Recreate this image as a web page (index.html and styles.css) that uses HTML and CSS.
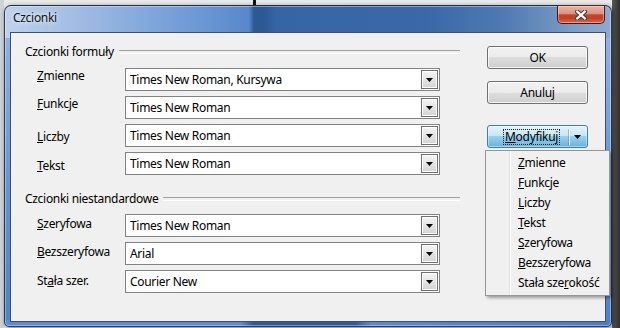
FILE: index.html
```html
<!DOCTYPE html>
<html lang="pl">
<head>
<meta charset="utf-8">
<title>Czcionki</title>
<link rel="stylesheet" href="styles.css">
</head>
<body>
<div class="window">
  <div class="titlebar">
    <span class="title">Czcionki</span>
    <div class="close">
      <svg width="12" height="10" viewBox="0 0 12 10">
        <path d="M2.2 1.6 L9.8 8.4 M9.8 1.6 L2.2 8.4" stroke="#3a3a3a" stroke-width="4.2" stroke-linecap="square" fill="none"/>
        <path d="M2.2 1.6 L9.8 8.4 M9.8 1.6 L2.2 8.4" stroke="#ffffff" stroke-width="2.2" stroke-linecap="square" fill="none"/>
      </svg>
    </div>
  </div>
  <div class="client">
    <div class="fields">
      <div class="group-head"><span>Czcionki formuły</span></div>
      <div class="rows rows-first">
        <label class="lbl p0"><u>Z</u>mienne</label>
        <div class="combo"><span class="val">Times New Roman, Kursywa</span><span class="drop"><svg width="7" height="4" viewBox="0 0 7 4"><polygon points="0,0 7,0 3.5,4" fill="#000"/></svg></span></div>
        <label class="lbl p0"><u>F</u>unkcje</label>
        <div class="combo"><span class="val">Times New Roman</span><span class="drop"><svg width="7" height="4" viewBox="0 0 7 4"><polygon points="0,0 7,0 3.5,4" fill="#000"/></svg></span></div>
        <label class="lbl p5"><u>L</u>iczby</label>
        <div class="combo"><span class="val">Times New Roman</span><span class="drop"><svg width="7" height="4" viewBox="0 0 7 4"><polygon points="0,0 7,0 3.5,4" fill="#000"/></svg></span></div>
        <label class="lbl p6"><u>T</u>ekst</label>
        <div class="combo"><span class="val">Times New Roman</span><span class="drop"><svg width="7" height="4" viewBox="0 0 7 4"><polygon points="0,0 7,0 3.5,4" fill="#000"/></svg></span></div>
      </div>
      <div class="group-head second"><span>Czcionki niestandardowe</span></div>
      <div class="rows rows-second">
        <label class="lbl p2"><u>S</u>zeryfowa</label>
        <div class="combo"><span class="val">Times New Roman</span><span class="drop"><svg width="7" height="4" viewBox="0 0 7 4"><polygon points="0,0 7,0 3.5,4" fill="#000"/></svg></span></div>
        <label class="lbl p2"><u>B</u>ezszeryfowa</label>
        <div class="combo"><span class="val">Arial</span><span class="drop"><svg width="7" height="4" viewBox="0 0 7 4"><polygon points="0,0 7,0 3.5,4" fill="#000"/></svg></span></div>
        <label class="lbl p3">St<u>a</u>ła szer.</label>
        <div class="combo"><span class="val">Courier New</span><span class="drop"><svg width="7" height="4" viewBox="0 0 7 4"><polygon points="0,0 7,0 3.5,4" fill="#000"/></svg></span></div>
      </div>
    </div>
    <div class="buttons">
      <div class="btn">OK</div>
      <div class="btn btn-gap">Anuluj</div>
      <div class="btn btn-split">
        <span class="focus"><u>M</u>odyfikuj</span>
        <span class="sep"></span>
        <svg class="split-arrow" width="7" height="4" viewBox="0 0 7 4"><polygon points="0,0 7,0 3.5,4" fill="#000"/></svg>
        <div class="menu">
          <div class="item"><u>Z</u>mienne</div>
          <div class="item"><u>F</u>unkcje</div>
          <div class="item"><u>L</u>iczby</div>
          <div class="item"><u>T</u>ekst</div>
          <div class="item"><u>S</u>zeryfowa</div>
          <div class="item"><u>B</u>ezszeryfowa</div>
          <div class="item">Stała sze<u>r</u>okość</div>
        </div>
      </div>
    </div>
  </div>
</div>
</body>
</html>
```
FILE: styles.css
```css
* { box-sizing: border-box; }

html, body { margin: 0; }

body {
  width: 620px;
  height: 328px;
  overflow: hidden;
  font-family: "Noto Sans", "Open Sans", sans-serif;
  font-size: 12px;
  line-height: 16px;
  letter-spacing: -0.3px;
  color: #000;
  padding: 5px 0 0 4px;
  background:
    linear-gradient(to right, transparent 253px, #111 253px, #111 256px, transparent 256px) top left / 100% 6px no-repeat,
    linear-gradient(to right, #cfd2d6 0, #cfd2d6 4px, #e9e9e9 4px, #e9e9e9 612px, #5a5a5a 612px, #2e2e2e 620px);
}

.window {
  width: 608px;
  height: 322px;
  border: 1px solid rgba(18, 30, 52, 0.8);
  border-radius: 7px 7px 5px 5px;
  padding: 0 5px 4px 5px;
  display: flex;
  flex-direction: column;
  box-shadow: inset 0 0 0 1px rgba(255, 255, 255, 0.35), 1px 1px 4px rgba(0, 0, 0, 0.5);
  background:
    linear-gradient(to right, #bdd2ec 0, #9dbae3 80px, #719cd8 180px, #5888cc 244px, #2c5893 249px, #2c5893 258px, #3665a6 272px, #3a68a8 420px, #4f7ab2 500px, #86a5cc 585px, #8eabd0 608px) top left / 100% 32px no-repeat,
    linear-gradient(to right, #5d8cd0 0, #5d8cd0 236px, #2f5b9b 248px, #2f5b9b 350px, #5a8ad0 366px, #4a7cc4 608px) bottom left / 100% 6px no-repeat,
    linear-gradient(to bottom, #9ab8e2 0, #6592d0 60%, #4f80c6 100%);
}

.titlebar {
  height: 26px;
  display: flex;
  align-items: flex-start;
}

.title {
  padding: 4px 0 0 3px;
  color: #111;
  text-shadow: 0 0 6px rgba(255, 255, 255, 0.9), 0 0 3px rgba(255, 255, 255, 0.6);
}

.close {
  margin: -1px 1px 0 auto;
  width: 48px;
  height: 19px;
  border: 1px solid #4a1610;
  border-top-color: #5a2a22;
  border-radius: 0 0 5px 5px;
  background: linear-gradient(to bottom, #eab4a6 0%, #dc917e 45%, #c5442b 52%, #c53e27 72%, #d86a4e 100%);
  box-shadow: inset 0 0 0 1px rgba(255, 220, 210, 0.45);
  display: flex;
  align-items: center;
  justify-content: center;
}

.client {
  flex: 1;
  background: #f0f0f0;
  border: 1px solid #3d4f6b;
  display: flex;
  padding: 11px 0 0 14px;
}

.fields {
  width: 435px;
  display: flex;
  flex-direction: column;
}

.group-head {
  display: flex;
  align-items: center;
  height: 16px;
  gap: 5px;
}

.group-head::after {
  content: "";
  flex: 1;
  height: 2px;
  border-top: 1px solid #a0a0a0;
  border-bottom: 1px solid #ffffff;
}

.group-head.second { margin-top: 16px; }

.rows {
  display: grid;
  grid-template-columns: 88px 315px;
  grid-auto-rows: 23px;
  row-gap: 5px;
  margin-left: 12px;
}

.rows-first { margin-top: 8px; }
.rows-second { margin-top: 7px; }

.lbl { align-self: start; white-space: nowrap; }
.p0 { padding-top: 0; }
.p2 { padding-top: 2px; }
.p3 { padding-top: 3px; }
.p5 { padding-top: 5px; }
.p6 { padding-top: 6px; }

.combo {
  display: flex;
  align-items: center;
  border: 1px solid #838383;
  background: #fff;
}

.val {
  flex: 1;
  padding-left: 4px;
  white-space: nowrap;
}

.drop {
  width: 17px;
  height: 19px;
  margin: 1px;
  border: 1px solid #6f6f6f;
  box-shadow: inset 0 0 0 1px #fff;
  background: linear-gradient(to bottom, #f4f4f4, #d4d4d4);
  display: flex;
  align-items: center;
  justify-content: center;
}

.buttons {
  margin: 2px 0 0 27px;
  width: 101px;
  display: flex;
  flex-direction: column;
}

.btn {
  height: 23px;
  border: 1px solid #707070;
  border-radius: 3px;
  background: linear-gradient(to bottom, #f2f2f2 0%, #ebebeb 50%, #dddddd 50%, #cfcfcf 100%);
  box-shadow: inset 0 0 0 1px rgba(255, 255, 255, 0.75);
  display: flex;
  align-items: center;
  justify-content: center;
}

.btn + .btn { margin-top: 12px; }
.btn.btn-split { margin-top: 21px; }

.btn-split {
  position: relative;
  justify-content: flex-start;
  padding-left: 15px;
  border-color: #3c7fb1;
  background: linear-gradient(to bottom, #e5f4fc 0%, #c4e5f6 50%, #98d1ef 50%, #68b3db 100%);
  box-shadow: inset 0 0 0 1px rgba(255, 255, 255, 0.4);
}

.focus {
  border: 1px dotted #222;
  line-height: 14px;
  padding: 0 1px;
  width: 57px;
  white-space: nowrap;
}

.sep {
  width: 1px;
  height: 16px;
  margin-left: 9px;
  background: #fff;
  box-shadow: -1px 0 0 rgba(60, 100, 140, 0.35);
}

.split-arrow { margin-left: 4px; }

.menu {
  position: absolute;
  left: -3px;
  top: 24px;
  width: 125px;
  padding: 2px 0;
  border: 1px solid #979797;
  background: linear-gradient(to right, #f0f0f0 0, #f0f0f0 23px, #e2e3e3 23px, #e2e3e3 24px, #ffffff 24px, #ffffff 25px, #f0f0f0 25px);
  box-shadow: 2px 2px 3px rgba(0, 0, 0, 0.35);
  z-index: 5;
}

.item {
  height: 20px;
  line-height: 20px;
  padding-left: 32px;
  white-space: nowrap;
}
```
